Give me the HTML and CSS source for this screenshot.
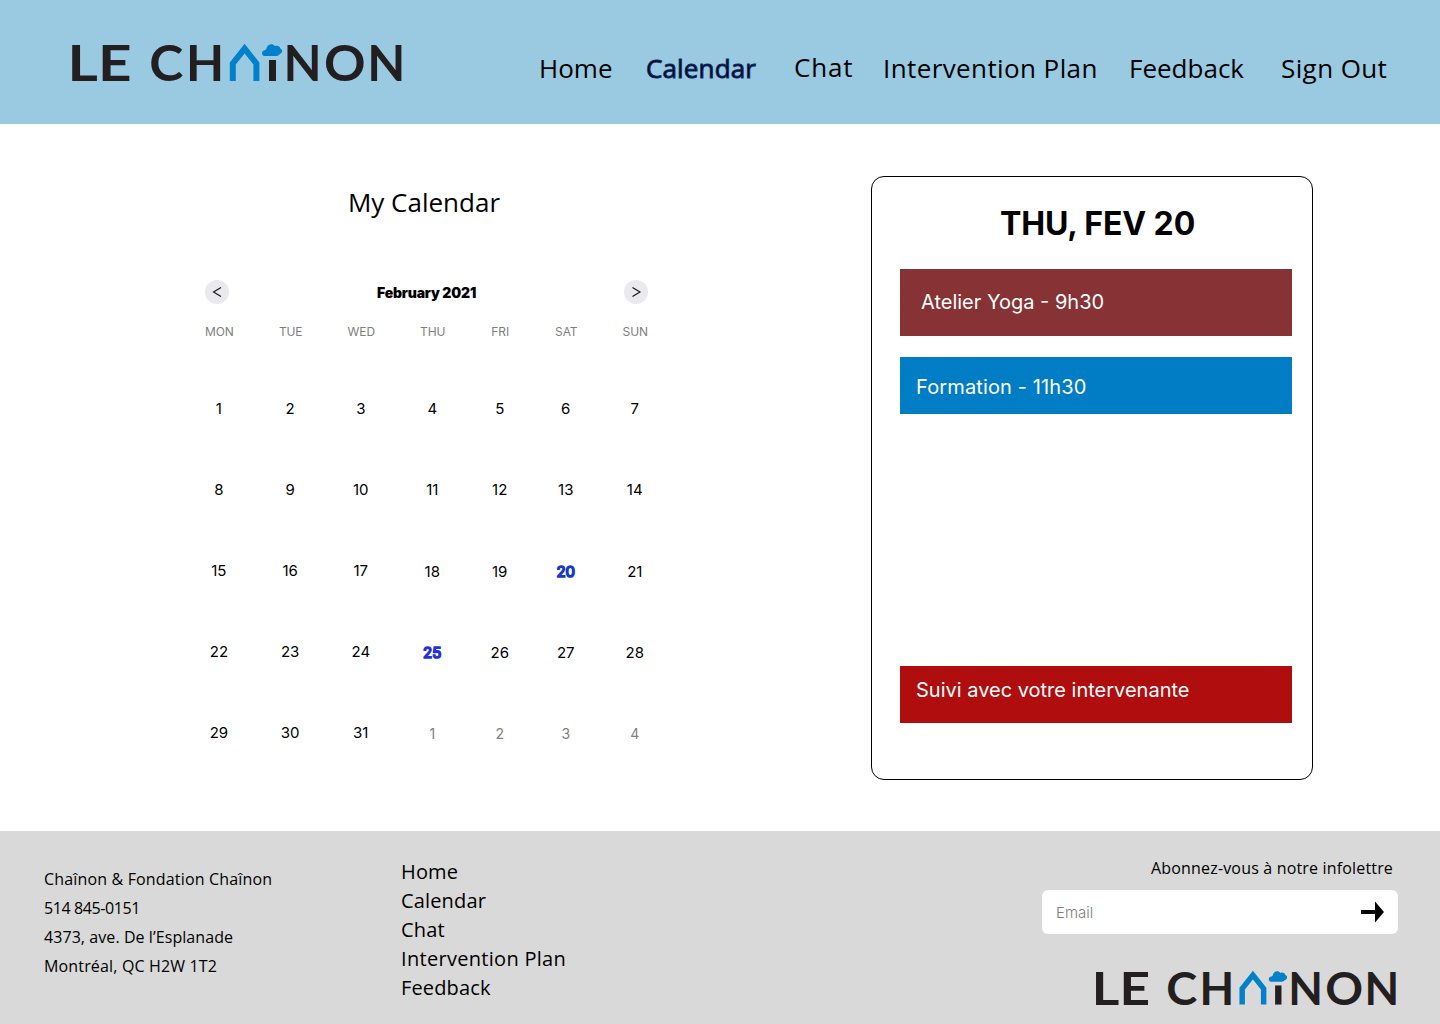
FILE: index.html
```html
<!DOCTYPE html>
<html lang="fr">
<head>
<meta charset="utf-8">
<title>Le Chaînon – Calendar</title>
<link rel="stylesheet" href="styles.css">
</head>
<body>
<header class="header">
  <svg class="logo" viewBox="0 0 332 40">
    <g class="logo-letters">
      <text transform="translate(-3.500 38) scale(1.180 1)">L</text><text transform="translate(27 38) scale(1.180 1)">E</text>
      <text transform="translate(78.200 38) scale(1.040 1)">C</text><text transform="translate(115 38)">H</text>
      <text transform="translate(212.500 38)">N</text><text transform="translate(253 38) scale(1.040 1)">O</text><text transform="translate(296.300 38)">N</text>
    </g>
    <path class="logo-house" d="M161.800 38V20.500L173.600 5.600L185.400 20.500V38"/>
    <path class="logo-cloud" d="M193.500 13C190.500 12.700 190 8 193.500 7.200C195.500 7 195.300 5.500 196 4C197.500 0.500 202.300 0.500 203.800 3.200C206.500 2.200 209 3.500 209.300 5.600C212.300 7 211.500 10.300 208.500 11.200C207.500 12.700 206 13 204 13Z"/>
    <path class="logo-stem" d="M198 17h7v21h-7z"/>
  </svg>
  <nav class="nav">
    <a>Home</a><a class="active">Calendar</a><a class="chat">Chat</a><a class="plan">Intervention Plan</a><a>Feedback</a><a class="sign-out">Sign Out</a>
  </nav>
</header>

<main class="main">
  <section class="calendar">
    <h1>My Calendar</h1>
    <div class="month">
      <button><svg width="24" height="24"><path d="M16 7.500L8.500 12L16 16.500"/></svg></button>
      <strong>February 2021</strong>
      <button><svg width="24" height="24"><path d="M8.500 7.500L16 12L8.500 16.500"/></svg></button>
    </div>
    <div class="days">
      <div class="col"><b>MON</b><i>1</i><i>8</i><i>15</i><i>22</i><i>29</i></div>
      <div class="col"><b>TUE</b><i>2</i><i>9</i><i>16</i><i>23</i><i>30</i></div>
      <div class="col"><b>WED</b><i>3</i><i>10</i><i>17</i><i>24</i><i>31</i></div>
      <div class="col low"><b>THU</b><i>4</i><i>11</i><i>18</i><i class="event-day bright">25</i><i class="next">1</i></div>
      <div class="col low"><b>FRI</b><i>5</i><i>12</i><i>19</i><i>26</i><i class="next">2</i></div>
      <div class="col low"><b>SAT</b><i>6</i><i>13</i><i class="event-day">20</i><i>27</i><i class="next">3</i></div>
      <div class="col low"><b>SUN</b><i>7</i><i>14</i><i>21</i><i>28</i><i class="next">4</i></div>
    </div>
  </section>
  <section class="agenda">
    <h2>THU, FEV 20</h2>
    <div class="event yoga">Atelier Yoga - 9h30</div>
    <div class="event formation">Formation - 11h30</div>
    <div class="event follow">Suivi avec votre intervenante</div>
  </section>
</main>

<footer class="footer">
  <address><span>Chaînon &amp; Fondation Chaînon</span><span class="phone">514 845-0151</span><span class="street">4373, ave. De l’Esplanade</span><span>Montréal, QC H2W 1T2</span></address>
  <ul class="links"><li>Home</li><li>Calendar</li><li>Chat</li><li class="plan">Intervention Plan</li><li>Feedback</li></ul>
  <div class="signup">
    <p>Abonnez-vous à notre infolettre</p>
    <div class="field"><span>Email</span><svg width="23" height="22"><path d="M0 9h14V0.500L23 11L14 21.500V13H0z"/></svg></div>
    <svg class="logo small" viewBox="0 0 332 40">
      <g class="logo-letters">
        <text transform="translate(-3.500 38) scale(1.180 1)">L</text><text transform="translate(27 38) scale(1.180 1)">E</text>
        <text transform="translate(78.200 38) scale(1.040 1)">C</text><text transform="translate(115 38)">H</text>
        <text transform="translate(212.500 38)">N</text><text transform="translate(253 38) scale(1.040 1)">O</text><text transform="translate(296.300 38)">N</text>
      </g>
      <path class="logo-house" d="M161.800 38V20.500L173.600 5.600L185.400 20.500V38"/>
      <path class="logo-cloud" d="M193.500 13C190.500 12.700 190 8 193.500 7.200C195.500 7 195.300 5.500 196 4C197.500 0.500 202.300 0.500 203.800 3.200C206.500 2.200 209 3.500 209.300 5.600C212.300 7 211.500 10.300 208.500 11.200C207.500 12.700 206 13 204 13Z"/>
      <path class="logo-stem" d="M198 17h7v21h-7z"/>
    </svg>
  </div>
</footer>
</body>
</html>
```
FILE: styles.css
```css
* { box-sizing: border-box; margin: 0; padding: 0; }
body { width: 1440px; height: 1024px; background: #fff; color: #000; font-family: "Open Sans", sans-serif; display: flex; flex-direction: column; overflow: hidden; }
.logo { width: 332px; height: 40px; display: block; overflow: visible; }
.logo-letters { font: 700 49.5px Lato, sans-serif; fill: #231f20; }
.logo-house { fill: none; stroke: #0081c9; stroke-width: 6; }
.logo-cloud { fill: #0081c9; }
.logo-stem { fill: #231f20; }

.header { height: 124px; background: #99cae1; display: flex; padding: 43px 48px 0 71px; justify-content: space-between; }
.nav { display: grid; grid-template-columns: 107px 148px 89px 246px 152px 111px; font-size: 26px; line-height: 36px; padding-top: 7px; white-space: nowrap; }
.nav .chat { margin-top: -1px; letter-spacing: 0.8px; }
.nav .active { -webkit-text-stroke: 1px #0a2c6c; letter-spacing: 0.15px; }
.nav .plan { letter-spacing: 0.4px; }
.nav .sign-out { letter-spacing: 0.4px; }

.main { height: 707px; display: flex; }
.calendar { width: 871px; padding: 60px 0 0 205px; }
h1 { font-weight: 400; font-size: 26px; line-height: 36px; width: 438px; text-align: center; }
.month { width: 443px; height: 24px; margin-top: 60px; display: flex; justify-content: space-between; font: 700 14px/26px Inter, sans-serif; }
.month strong { letter-spacing: -0.17px; }
.month button { width: 24px; height: 24px; border: 0; border-radius: 50%; background: #e9e9ee; }
.month svg { display: block; }
.month path { fill: none; stroke: #111; stroke-width: 1.1; }
.days { width: 443px; margin-top: 18px; display: flex; justify-content: space-between; font-family: Inter, sans-serif; }
.col { display: flex; flex-direction: column; align-items: center; }
.col b { font-weight: 400; font-size: 12px; line-height: 20px; letter-spacing: -0.1px; color: #808080; margin-bottom: 26px; }
.col i { font-style: normal; font-size: 15px; height: 81px; line-height: 81px; margin-right: 1px; }
.col.low i { height: 81.35px; line-height: 82px; }
.col .next { color: #808080; font-size: 14px; }
.col .event-day { color: #1539c8; -webkit-text-stroke: 1.6px #1539c8; }
.col .bright { color: #2433d8; -webkit-text-stroke-color: #2433d8; }

.agenda { width: 442px; height: 604px; margin-top: 52px; border: 1px solid #000; border-radius: 13px; padding: 24px 20px 0 28px; font-family: Inter, sans-serif; }
h2 { font-size: 32px; line-height: 45px; height: 44px; letter-spacing: -0.1px; text-align: center; padding-left: 3px; }
.event { color: #fff; font-size: 20px; height: 57px; line-height: 60px; padding-left: 16px; }
.yoga { background: #873234; height: 67px; line-height: 66px; padding-left: 21px; margin-top: 24px; }
.formation { background: #007dc4; margin-top: 21px; letter-spacing: 0.13px; }
.follow { background: #af0d0e; margin-top: 252px; line-height: 48px; }

.footer { height: 193px; background: #d9d9d9; display: flex; padding: 0 42px 0 44px; }
address { width: 357px; padding-top: 34px; font-style: normal; font-size: 16px; line-height: 29px; letter-spacing: 0.16px; display: flex; flex-direction: column; align-items: flex-start; }
.phone { letter-spacing: -0.4px; }
.street { letter-spacing: 0.07px; }
.links { list-style: none; padding-top: 26px; font-size: 20px; line-height: 29px; letter-spacing: 0.15px; }
.links .plan { letter-spacing: 0.3px; }
.signup { margin-left: auto; width: 356px; padding-top: 24px; }
.signup p { font-size: 16px; line-height: 26px; letter-spacing: 0.17px; text-align: right; padding-right: 5px; }
.field { margin-top: 9px; height: 44px; background: #fff; border-radius: 6px; padding: 0 14px; display: flex; justify-content: space-between; align-items: center; color: #808080; font: 300 15px Inter, sans-serif; }
.field path { fill: #000; }
.logo.small { width: 302px; height: 36.4px; margin: 36px 1px 0 auto; }
```
